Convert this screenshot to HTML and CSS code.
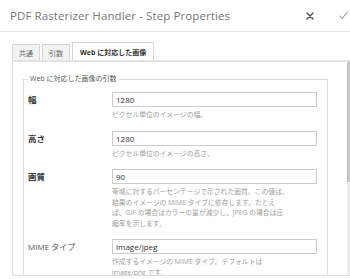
FILE: index.html
```
<!DOCTYPE html>
<html lang="ja">
<head>
    <meta charset="UTF-8">
    <meta name="viewport" content="width=device-width, initial-scale=1.0">
    <title>PDF Rasterizer Handler - Step Properties</title>
    <link rel="stylesheet" href="styles.css">
</head>
<body>
    <div class="dialog">
        <header class="dialog-header">
            <h1 class="dialog-title">PDF Rasterizer Handler - Step Properties</h1>
            <div class="dialog-actions">
                <button class="icon-btn close" title="閉じる">
                    <svg width="8" height="8" viewBox="0 0 8 8"><path d="M1 1 L7 7 M7 1 L1 7" /></svg>
                </button>
                <button class="icon-btn done" title="完了">
                    <svg width="9" height="9" viewBox="0 0 9 9"><path d="M0.8 5 L3.2 7.6 L8.4 1" /></svg>
                </button>
            </div>
        </header>

        <nav class="tabs">
            <span class="tab">共通</span>
            <span class="tab">引数</span>
            <span class="tab active">Web に対応した画像</span>
        </nav>

        <div class="panel">
            <div class="panel-body">
                <fieldset class="group">
                    <legend>Web に対応した画像の引数</legend>

                    <div class="field">
                        <label class="field-label">幅</label>
                        <div class="field-control">
                            <input type="text" value="1280">
                            <p class="hint">ピクセル単位のイメージの幅。</p>
                        </div>
                    </div>

                    <div class="field">
                        <label class="field-label">高さ</label>
                        <div class="field-control">
                            <input type="text" value="1280">
                            <p class="hint">ピクセル単位のイメージの高さ。</p>
                        </div>
                    </div>

                    <div class="field">
                        <label class="field-label">画質</label>
                        <div class="field-control">
                            <input type="text" value="90">
                            <p class="hint">帯域に対するパーセンテージで示された画質。この値は、<br>結果のイメージの MIME タイプに依存します。たとえ<br>ば、GIF の場合はカラーの量が減少し、JPEG の場合は圧<br>縮率を示します。</p>
                        </div>
                    </div>

                    <div class="field">
                        <label class="field-label plain">MIME タイプ</label>
                        <div class="field-control">
                            <input type="text" value="image/jpeg">
                            <p class="hint">作成するイメージの MIME タイプ。デフォルトは<br>image/png です。</p>
                        </div>
                    </div>
                </fieldset>
            </div>
            <div class="scrollbar"><div class="scrollbar-thumb"></div></div>
        </div>
    </div>
</body>
</html>
```

FILE: styles.css
```
body {
    margin: 0;
    background: #fff;
    font-family: "Open Sans", "Noto Sans CJK JP", sans-serif;
    color: #333;
}

.dialog {
    width: 350px;
    height: 279px;
    overflow: hidden;
}

/* header with title and the two actions */
.dialog-header {
    display: flex;
    align-items: center;
    height: 31px;
    padding: 0 2px 0 10px;
    border-bottom: 1px solid #e8e8e8;
}

.dialog-title {
    margin: 0;
    font-size: 11.5px;
    font-weight: 400;
    color: #777;
    letter-spacing: 0.1px;
}

.dialog-actions {
    margin-left: auto;
    display: flex;
    align-items: center;
    gap: 25px;
}

.icon-btn {
    border: none;
    background: none;
    padding: 0;
    display: flex;
}

.icon-btn svg path {
    fill: none;
    stroke-linecap: round;
    stroke-linejoin: round;
}

.close svg path {
    stroke: #555;
    stroke-width: 1.5;
}

.done svg path {
    stroke: #888;
    stroke-width: 1;
}

/* tabs */
.tabs {
    display: flex;
    align-items: flex-end;
    gap: 2px;
    height: 18px;
    margin-top: 10px;
    padding-left: 12px;
}

.tab {
    display: flex;
    align-items: center;
    height: 15px;
    padding: 0 6px;
    font-size: 7px;
    color: #666;
    background: #f2f2f2;
    border: 1px solid #d6d6d6;
    border-bottom: none;
}

.tab.active {
    height: 17px;
    padding: 0 7px;
    font-weight: 700;
    color: #333;
    background: #fff;
}

/* tab panel with its scroll area */
.panel {
    display: flex;
    height: 213px;
    margin-left: 12px;
    border-left: 1px solid #ddd;
    border-top: 2px solid #e2e2e2;
    border-bottom: 1px solid #ddd;
}

.panel-body {
    flex: 1;
    overflow: hidden;
    padding: 12px 0 0 10px;
}

.scrollbar {
    width: 3px;
    background: #ececec;
}

.scrollbar-thumb {
    height: 120px;
    background: #c6c6c6;
}

.group {
    width: 305px;
    box-sizing: border-box;
    margin: 0;
    padding: 8px 10px 0 4px;
    border: 1px solid #ddd;
}

.group legend {
    padding: 0 2px;
    font-size: 7px;
    line-height: 10px;
    color: #555;
}

.field {
    display: grid;
    grid-template-columns: 84px 205px;
    margin-bottom: 10px;
}

.field-label {
    font-size: 8.5px;
    font-weight: 600;
    line-height: 15px;
    color: #333;
}

.field-label.plain {
    font-size: 8px;
    font-weight: 400;
    color: #555;
}

.field-control input {
    display: block;
    width: 205px;
    height: 15px;
    box-sizing: border-box;
    margin: 0;
    padding: 0 3px;
    border: 1px solid #ccc;
    font-family: "Open Sans", "Noto Sans CJK JP", sans-serif;
    font-size: 8px;
    color: #333;
}

.hint {
    margin: 3px 0 0;
    font-size: 6.8px;
    line-height: 10.5px;
    color: #a0a0a0;
    white-space: nowrap;
}
```
